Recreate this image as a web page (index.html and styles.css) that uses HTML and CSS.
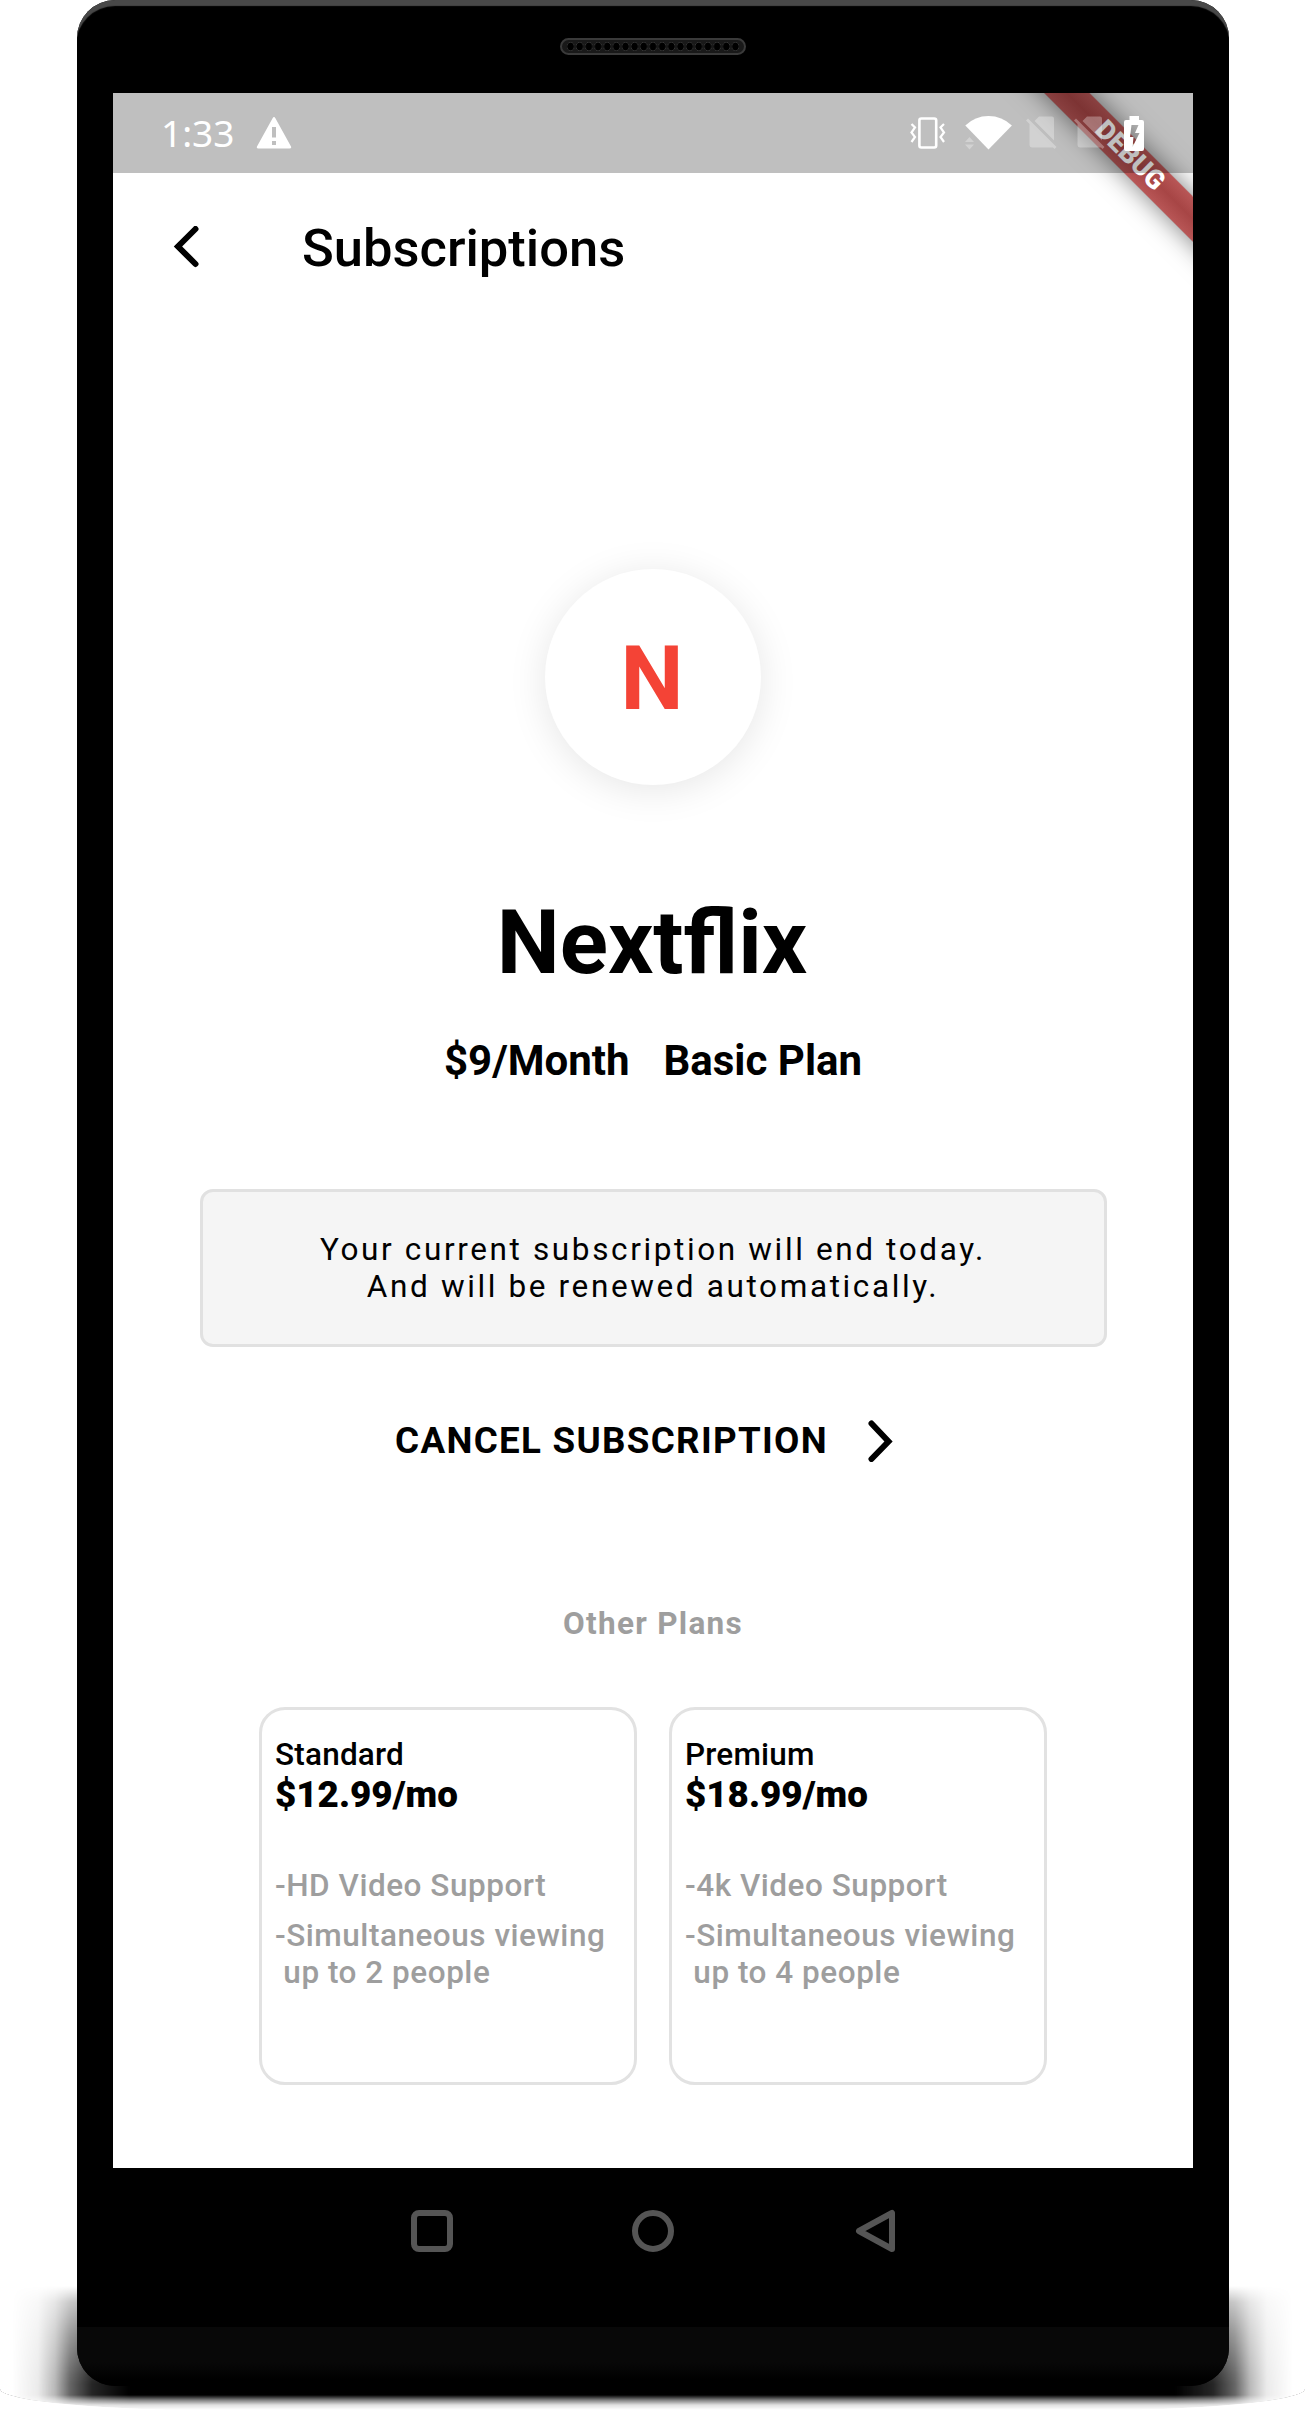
FILE: index.html
```html
<!DOCTYPE html>
<html lang="en">
<head>
<meta charset="utf-8">
<title>Subscriptions</title>
<link rel="stylesheet" href="styles.css">
</head>
<body>
<div class="stage">
  <div class="ground-shadow"></div>
  <div class="phone">
    <div class="earpiece">
      <div class="speaker"></div>
    </div>
    <div class="screen">
      <div class="debug-banner">DEBUG</div>
      <div class="status-bar">
        <span class="clock">1:33</span>
        <svg class="icon-warning" width="36" height="32" viewBox="0 0 36 32"><path fill="#fff" fill-rule="evenodd" d="M16.6 1.2Q18 -1 19.4 1.2L35 29.500Q35.800 31.500 33.500 31.500H2.500Q.2 31.500 1 29.500ZM16 10V20.500H20V10ZM16 24V28H20V24Z"/></svg>
        <div class="system-icons">
          <svg width="36" height="34" viewBox="0 0 36 34" fill="none" stroke="#fff"><rect x="9.400" y="2.500" width="16.800" height="29" rx="2" stroke-width="2.600"/><path stroke-width="2.200" d="M1.500 8L5 11.500L1.500 16.500L5 21L1.500 26M34 8L30.500 11.500L34 16.500L30.500 21L34 26"/></svg>
          <svg class="icon-wifi" width="48" height="34" viewBox="0 0 48 34"><path fill="#fff" d="M.3 9.500Q10 0 23.500 0T46.900 9.500L23.500 33.500Z"/><path fill="#fff" opacity=".3" d="M0 26L4.500 21L9 26ZM0 28.500H9L4.500 33.500Z"/></svg>
          <svg class="icon-sim" width="31" height="34" viewBox="0 0 31 34"><path fill="#fff" opacity=".3" d="M8.500 5L13 .5H26Q28 .5 28 2.500V24.500ZM3.500 8L27 31.400H6Q3.500 31.400 3.500 29ZM0 4.500L2 2.500L30.500 31L28.500 33Z"/></svg>
          <svg class="icon-sim second" width="31" height="34" viewBox="0 0 31 34"><path fill="#fff" opacity=".3" d="M8.500 5L13 .5H26Q28 .5 28 2.500V24.500ZM3.500 8L27 31.400H6Q3.500 31.400 3.500 29ZM0 4.500L2 2.500L30.500 31L28.500 33Z"/></svg>
          <svg class="icon-battery" width="20" height="35" viewBox="0 0 20 35"><path fill="#fff" fill-rule="evenodd" d="M5.500 0H15V4H18Q20 4 20 6V33Q20 35 18 35H2Q0 35 0 33V6Q0 4 2 4H5.500ZM7.500 9L6 21H9.500L8.500 31L15.500 17H11L14.500 9Z"/></svg>
        </div>
      </div>
      <header class="app-bar">
        <svg class="icon-back" width="26" height="42" viewBox="0 0 26 42"><path d="M22.500 3L5 20.500L22.500 38" fill="none" stroke="#000" stroke-width="6" stroke-linecap="round" stroke-linejoin="miter"/></svg>
        <h1 class="title">Subscriptions</h1>
      </header>
      <main class="content">
        <div class="logo">N</div>
        <h2 class="service">Nextflix</h2>
        <div class="plan"><span>$9/Month</span><span>Basic Plan</span></div>
        <p class="notice">Your current subscription will end today.<br>And will be renewed automatically.</p>
        <div class="cancel">
          <span>CANCEL SUBSCRIPTION</span>
          <svg width="26" height="42" viewBox="0 0 26 42"><path d="M3.500 3.500L20.500 21.500L3.500 39" fill="none" stroke="#000" stroke-width="6" stroke-linecap="round"/></svg>
        </div>
        <h3 class="other">Other Plans</h3>
        <div class="cards">
          <section class="card">
            <div class="name">Standard</div>
            <div class="price">$12.99/mo</div>
            <p class="feature">-HD Video Support</p>
            <p class="feature">-Simultaneous viewing<br>&nbsp;up to 2 people</p>
          </section>
          <section class="card">
            <div class="name">Premium</div>
            <div class="price">$18.99/mo</div>
            <p class="feature">-4k Video Support</p>
            <p class="feature">-Simultaneous viewing<br>&nbsp;up to 4 people</p>
          </section>
        </div>
      </main>
    </div>
    <nav class="nav-bar">
      <svg width="44" height="44" viewBox="0 0 44 44"><rect x="4" y="4" width="36" height="36" rx="5"/></svg>
      <svg width="44" height="44" viewBox="0 0 44 44"><circle cx="22" cy="22" r="18"/></svg>
      <svg width="44" height="44" viewBox="0 0 44 44"><path d="M40 4V40L7 22Z"/></svg>
    </nav>
    <div class="chin"></div>
  </div>
</div>
</body>
</html>
```
FILE: styles.css
```css
* { box-sizing: border-box; }
body { margin: 0; background: #fff; font-family: Roboto, sans-serif; color: #000; }
h1, h2, h3, p { margin: 0; }
svg { display: block; flex: none; }
.stage { position: relative; width: 1305px; height: 2411px; padding-left: 77px; overflow: hidden; }
.ground-shadow {
  position: absolute; left: 0; bottom: 0; width: 1305px; height: 127px;
  background: #000; border-radius: 0 0 240px 240px / 0 0 22px 22px;
  mask-image:
    linear-gradient(90deg, transparent 12px, rgba(0,0,0,.08) 38px, rgba(0,0,0,.28) 55px, rgba(0,0,0,.6) 70px, rgba(0,0,0,.85) 92px, #000 130px, #000 1175px, rgba(0,0,0,.85) 1213px, rgba(0,0,0,.6) 1235px, rgba(0,0,0,.28) 1250px, rgba(0,0,0,.08) 1267px, transparent 1293px),
    linear-gradient(transparent 2px, rgba(0,0,0,.35) 18px, rgba(0,0,0,.65) 50px, rgba(0,0,0,.95) 90px, #000 100px, #000 111px, rgba(0,0,0,.5) 116px, rgba(0,0,0,.12) 121px, transparent 126px);
  mask-composite: intersect;
}
.phone {
  position: relative; width: 1152px; height: 2386px; background: #000;
  border-radius: 38px; overflow: hidden; display: flex; flex-direction: column;
  padding: 0 36px;
  box-shadow: inset 0 7px 1px -1px #484848;
}
.earpiece { height: 93px; padding-top: 38px; display: flex; justify-content: center; }
.speaker {
  width: 186px; height: 17px; border-radius: 9px; border: 2px solid #3a3a3a; padding: 0 4px;
  background: radial-gradient(ellipse 3.8px 4.500px at center, #000 80%, #444 100%, transparent) 0 50% / 9.160px 11px repeat-x content-box, #191919;
}
.screen { position: relative; width: 1080px; height: 2075px; background: #fff; overflow: hidden; flex: none; }
.debug-banner {
  position: absolute; left: 806.900px; top: 47.300px; width: 420px; height: 31.500px;
  transform: rotate(45deg);
  background:
    linear-gradient(rgba(183,28,28,.63), rgba(183,28,28,.63)),
    linear-gradient(rgba(0,0,0,.27), rgba(0,0,0,.45), rgba(0,0,0,.27));
  color: #fff; text-align: center;
  font-size: 26.800px; font-weight: 900; line-height: 31.500px;
  box-shadow: 0 0 26px rgba(0,0,0,.5);
}
.status-bar {
  position: relative; height: 80px; background: rgba(0,0,0,.25);
  display: flex; align-items: center; padding: 0 49px 0 48px;
}
.clock { font-family: "Noto Sans", sans-serif; font-size: 37px; line-height: 80px; color: #fff; }
.icon-warning { margin-left: 22px; }
.system-icons { margin-left: auto; display: flex; align-items: center; }
.icon-wifi { margin-left: 19px; }
.icon-sim { margin-left: 13px; }
.icon-sim.second { margin-left: 17px; }
.icon-battery { margin-left: 19px; }
.app-bar { height: 147px; display: flex; align-items: center; padding-left: 60px; }
.title { margin-left: 103px; padding-top: 2px; font-size: 52.500px; font-weight: 500; line-height: 62px; }
.content { display: flex; flex-direction: column; align-items: center; }
.logo {
  margin-top: 249px; width: 216px; height: 216px; border-radius: 50%; background: #fff;
  display: flex; align-items: center; justify-content: center; padding: 2px 2px 0 0;
  font-size: 89.250px; font-weight: 700; color: #f44336;
  box-shadow: 0 5px 38px rgba(0,0,0,.1);
}
.service { margin-top: 105px; padding-right: 2px; font-size: 89.250px; font-weight: 700; line-height: 105px; }
.plan { margin-top: 41px; display: flex; gap: 34px; font-size: 42px; font-weight: 700; line-height: 49px; }
.notice {
  margin-top: 104px; width: 907px; height: 158px; border: 3px solid #e1e1e1; border-radius: 13px;
  background: #f5f5f5; padding-top: 39px; text-align: center;
  font-size: 31.500px; line-height: 37px; letter-spacing: 2.625px;
}
.cancel { margin-top: 73px; padding-right: 17px; display: flex; align-items: center; gap: 40px; font-size: 36.750px; font-weight: 700; line-height: 41px; letter-spacing: 1.300px; }
.cancel span { padding-bottom: 1px; }
.other { margin-top: 143px; font-size: 31.500px; font-weight: 700; line-height: 37px; letter-spacing: 1.300px; color: #9e9e9e; }
.cards { margin-top: 65px; display: flex; gap: 32px; }
.card { width: 378px; height: 378px; border: 3px solid #e2e2e2; border-radius: 26px; padding: 26px 0 0 13px; }
.name { font-size: 31.500px; font-weight: 500; line-height: 37px; letter-spacing: .2px; }
.price { font-size: 36.750px; font-weight: 900; line-height: 43px; }
.price + .feature { margin-top: 51px; }
.feature { margin-top: 13px; font-size: 31.500px; font-weight: 500; line-height: 37px; color: #9e9e9e; letter-spacing: .52px; }
.nav-bar { height: 159px; padding-top: 41px; display: flex; justify-content: center; gap: 177px; }
.nav-bar svg { fill: none; stroke: #555; stroke-width: 6; stroke-linejoin: round; }
.chin { flex: 1; margin: 0 -36px; background: linear-gradient(#080808 0, #080808 60%, #000 90%); }
```
